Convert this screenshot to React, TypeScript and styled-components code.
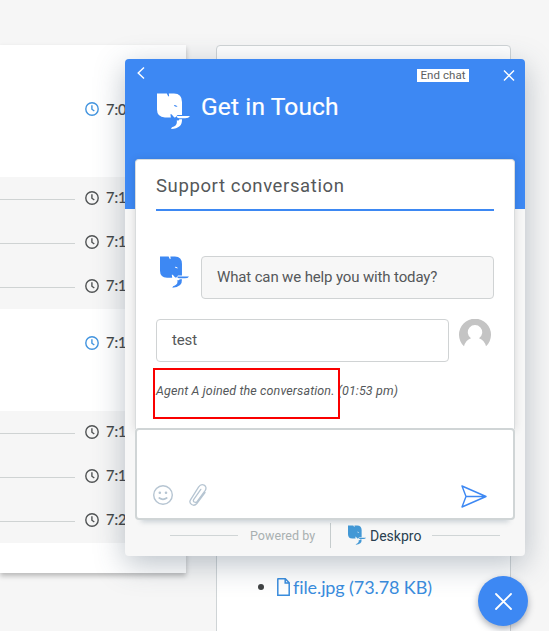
import React from "react";
import styled, { createGlobalStyle } from "styled-components";

const blue = "#3d88f3";

const GlobalStyle = createGlobalStyle`
  *, *::before, *::after { box-sizing: border-box; }
  body { margin: 0; background: #f6f6f6; }
  svg { display: block; flex: none; }
`;

const Page = styled.div`
  position: relative;
  width: 549px;
  height: 631px;
  overflow: hidden;
  display: flex;
  align-items: flex-start;
  gap: 30px;
  padding-top: 45px;
  background: #f6f6f6;
  color: #404344;
  font-family: Lato, sans-serif;
`;

const Timeline = styled.div`
  width: 186px;
  height: 528px;
  flex: none;
  background: #fff;
  box-shadow: 0 3px 5px rgba(0, 0, 0, 0.25);
`;

const Group = styled.div<{ $muted?: boolean }>`
  background: ${(p) => (p.$muted ? "#f6f6f6" : "#fff")};
`;

const TimeRow = styled.div<{ $height: number; $shift?: number }>`
  display: flex;
  align-items: center;
  height: ${(p) => p.$height}px;
  padding-bottom: ${(p) => p.$shift ?? 0}px;
`;

const Rule = styled.div<{ $hidden?: boolean }>`
  width: 75px;
  height: 1px;
  margin: 2px 10px 0 0;
  background: ${(p) => (p.$hidden ? "transparent" : "#cfd3d3")};
`;

const Time = styled.span`
  margin-left: 6px;
  font-size: 14.5px;
  line-height: 20px;
  -webkit-text-stroke: 0.2px currentColor;
`;

const Details = styled.div`
  width: 295px;
  height: 600px;
  flex: none;
  display: flex;
  align-items: flex-start;
  padding: 530px 0 0 41px;
  background: #fff;
  border: 1px solid #cfd4d6;
  border-radius: 4px;
`;

const Bullet = styled.span`
  width: 6px;
  height: 6px;
  margin: 8px 13px 0 0;
  border-radius: 50%;
  background: #404344;
`;

const FileLink = styled.a`
  display: flex;
  align-items: center;
  gap: 3px;
  color: #3a8dde;
  font-size: 18px;
  line-height: 22px;
  letter-spacing: -0.1px;
  white-space: nowrap;
`;

const Widget = styled.section`
  position: absolute;
  left: 125px;
  top: 59px;
  width: 400px;
  height: 497px;
  display: flex;
  flex-direction: column;
  border-radius: 4px;
  background: #f7f7f7;
  box-shadow: 0 8px 30px rgba(59, 81, 99, 0.35);
  font-family: Roboto, sans-serif;
  color: #55585a;
`;

const Header = styled.header`
  height: 150px;
  flex: none;
  border-radius: 4px 4px 0 0;
  background: ${blue};
  color: #fff;
`;

const HeaderBar = styled.div`
  display: flex;
  align-items: flex-start;
  height: 34px;
  padding: 8px 10px 0 12px;
`;

const EndChat = styled.span`
  width: 52px;
  height: 13px;
  margin: 2px 34px 0 auto;
  background: #fff;
  color: #5c5f61;
  font-size: 11.5px;
  line-height: 13px;
  letter-spacing: 0.05px;
  text-align: center;
  white-space: nowrap;
`;

const Brand = styled.div`
  display: flex;
  gap: 11px;
  padding-left: 32px;
`;

const BrandTitle = styled.h1`
  margin: 0;
  font-size: 24.5px;
  line-height: 27px;
  font-weight: 400;
  letter-spacing: 0.13px;
  -webkit-text-stroke: 0.2px currentColor;
`;

const Card = styled.div`
  width: 380px;
  height: 270px;
  flex: none;
  margin: -50px 0 0 10px;
  padding: 0 20px;
  background: #fff;
  border: 1px solid #d9dcdd;
  border-bottom: 0;
  border-radius: 4px 4px 0 0;
  box-shadow: 0 1px 8px rgba(0, 0, 0, 0.13);
`;

const ChatTitle = styled.h2`
  height: 51px;
  margin: 0 0 45px;
  padding-top: 16px;
  border-bottom: 2px solid ${blue};
  font-size: 18.5px;
  line-height: 21px;
  font-weight: 400;
  letter-spacing: 0.62px;
`;

const Message = styled.div`
  display: flex;
  gap: 10px;
  margin-bottom: 20px;
`;

const BotAvatar = styled.div`
  width: 35px;
  padding-left: 4px;
`;

const Bubble = styled.div<{ $muted?: boolean }>`
  width: 293px;
  height: 43px;
  padding: 0 15px;
  border: 1px solid #d0d3d4;
  border-radius: 4px;
  background: ${(p) => (p.$muted ? "#f7f7f7" : "#fff")};
  font-size: 15px;
  line-height: 41px;
  letter-spacing: -0.14px;
`;

const EventLine = styled.div`
  position: relative;
  top: 1px;
  font-size: 12.5px;
  line-height: 16px;
  font-style: italic;
  letter-spacing: 0.12px;
  white-space: nowrap;
`;

const Highlight = styled.div`
  position: absolute;
  left: -3px;
  top: -15px;
  width: 187px;
  height: 51px;
  border: 2px solid #fa0000;
`;

const Composer = styled.div`
  width: 380px;
  height: 92px;
  flex: none;
  display: flex;
  align-items: flex-end;
  margin: -1px 0 0 10px;
  padding: 0 26px 10px 15px;
  background: #fff;
  border: 2px solid #d0d5d6;
  border-radius: 4px;
  box-shadow: 0 8px 5px -6px rgba(70, 100, 120, 0.25);
  position: relative;
`;

const SmileIcon = styled.svg`
  margin-bottom: 2px;
`;

const ClipIcon = styled.svg`
  margin: 0 auto 1px 12px;
`;

const Footer = styled.footer`
  display: flex;
  align-items: center;
  height: 30px;
  padding-left: 45px;
  color: #a9b0b1;
  font-size: 12.5px;
`;

const FooterLine = styled.div`
  width: 68px;
  height: 1px;
  background: #d0d5d6;
`;

const Powered = styled.span`
  width: 92px;
  padding-left: 12px;
  letter-spacing: 0.05px;
  white-space: nowrap;
`;

const Divider = styled.div`
  width: 1px;
  height: 25px;
  margin-right: 17px;
  background: #c6cccd;
`;

const Deskpro = styled.span`
  width: 62px;
  margin: 1px 0 0 4px;
  color: #293f50;
  font-size: 14px;
`;

const Launcher = styled.button`
  position: absolute;
  left: 478px;
  top: 576px;
  width: 50px;
  height: 50px;
  padding: 0;
  display: grid;
  place-items: center;
  border: 0;
  border-radius: 50%;
  background: ${blue};
  box-shadow: 0 3px 7px rgba(40, 50, 70, 0.4);
`;

const Clock = ({ color }: { color: string }) => (
  <svg width="15" height="15" viewBox="0 0 15 15" fill="none" stroke={color}>
    <circle cx="7" cy="7" r="6.2" strokeWidth="1.4" />
    <path d="M6.9 3.3V7.2L9.3 9" strokeWidth="1.4" />
  </svg>
);

const Elephant = ({ width, height, color }: { width: number; height: number; color: string }) => (
  <svg width={width} height={height} viewBox="0 0 33 36" fill={color}>
    <path
      fillRule="evenodd"
      d="M0 .5H9.8L11.3 3.4 12.1 3 11.8 .5H17Q25 .7 25 9V22H20.5L18.6 24.2 17.3 24.4 14.5 21.2 13.4 21.2 13.9 24.5H8Q0 24 0 16.5ZM16.8 12.2Q18.8 11.4 20.6 13.7 18 14.2 16.8 12.2Z"
    />
    <path d="M19.5 23H33Q31.8 25.2 28.2 25.2H22Q20 25.2 19.5 23Z" />
    <path d="M25 26.2Q25.6 35.3 14 36 14.4 33.8 17 33.4 20.6 31.8 19.8 27.2 22.2 28 22.3 26.2Z" />
  </svg>
);

const Cross = ({ size, stroke }: { size: number; stroke: number }) => (
  <svg width={size} height={size} viewBox={`0 0 ${size} ${size}`} stroke="#fff" strokeWidth={stroke} strokeLinecap="round">
    <path d={`M1 1L${size - 1} ${size - 1}M${size - 1} 1L1 ${size - 1}`} />
  </svg>
);

const groups = [
  { lead: "7:0", times: ["7:1", "7:1", "7:1"], height: 132, shift: 3 },
  { lead: "7:1", times: ["7:1", "7:1", "7:2"], height: 102, shift: 34 },
];

export default function App() {
  return (
    <>
      <GlobalStyle />
      <Page>
        <Timeline>
          {groups.map((group, i) => (
            <React.Fragment key={i}>
              <Group>
                <TimeRow $height={group.height} $shift={group.shift}>
                  <Rule $hidden />
                  <Clock color="#4294df" />
                  <Time>{group.lead}</Time>
                </TimeRow>
              </Group>
              <Group $muted>
                {group.times.map((time, j) => (
                  <TimeRow key={j} $height={44} $shift={2}>
                    <Rule />
                    <Clock color="#515455" />
                    <Time>{time}</Time>
                  </TimeRow>
                ))}
              </Group>
            </React.Fragment>
          ))}
        </Timeline>
        <Details>
          <Bullet />
          <FileLink>
            <svg width="13" height="18" viewBox="0 0 13 18" fill="none" stroke="currentColor" strokeWidth="1.5">
              <path d="M1 .8H8.3L12.2 4.8V17.2H.8V1ZM8.2 1V5H12" />
            </svg>
            file.jpg (73.78 KB)
          </FileLink>
        </Details>

        <Widget>
          <Header>
            <HeaderBar>
              <svg width="8" height="12" viewBox="0 0 8 12" fill="none" stroke="#fff" strokeWidth="1.4">
                <path d="M7 .5L1.2 6L7 11.5" />
              </svg>
              <EndChat>End chat</EndChat>
              <svg width="12" height="16" viewBox="0 -2.5 12 16" stroke="#fff" strokeWidth="1.4">
                <path d="M1 1L11 11M11 1L1 11" />
              </svg>
            </HeaderBar>
            <Brand>
              <Elephant width={33} height={36} color="#fff" />
              <BrandTitle>Get in Touch</BrandTitle>
            </Brand>
          </Header>
          <Card>
            <ChatTitle>Support conversation</ChatTitle>
            <Message>
              <BotAvatar>
                <Elephant width={29} height={32} color={blue} />
              </BotAvatar>
              <Bubble $muted>What can we help you with today?</Bubble>
            </Message>
            <Message>
              <Bubble>test</Bubble>
              <svg width="32" height="32" viewBox="0 0 32 32">
                <path fill="#c4c4c4" fillRule="evenodd" d="M5 27.3A16 16 0 1 1 27 27.3Q25.5 21.5 20 19.3A7.2 7.2 0 1 0 12 19.3Q6.5 21.5 5 27.3Z" />
              </svg>
            </Message>
            <EventLine>
              Agent A joined the conversation. (01:53 pm)
              <Highlight />
            </EventLine>
          </Card>
          <Composer>
            <SmileIcon width="22" height="22" viewBox="0 0 22 22" fill="none" stroke="#b6c5d2" strokeWidth="1.4" strokeLinecap="round">
              <circle cx="11" cy="11" r="9.3" />
              <path d="M7.3 14Q11 16.6 14.7 14" strokeWidth="1.7" />
              <circle cx="7.8" cy="8.7" r=".6" fill="#b6c5d2" />
              <circle cx="14" cy="8.7" r=".6" fill="#b6c5d2" />
            </SmileIcon>
            <ClipIcon width="24" height="24" viewBox="0 0 24 24" fill="none" stroke="#b6c5d2" strokeWidth="1.3" strokeLinecap="round">
              <path d="M19 9.5L10.8 20.5C7.7 24.3 2.3 20.6 4.5 16.8L12.5 4.2C15.7-.7 22 2.7 19.3 7.3L11.2 18.3C9.3 20.6 6.2 18.6 7.8 16.3L14.8 6.4" />
            </ClipIcon>
            <svg width="26" height="23" viewBox="0 0 26 23" fill="none" stroke={blue} strokeWidth="1.4" strokeLinejoin="round">
              <path d="M1 1L25 11.5L1 22L5 11.5ZM5 11.5H25" />
            </svg>
          </Composer>
          <Footer>
            <FooterLine />
            <Powered>Powered by</Powered>
            <Divider />
            <Elephant width={18} height={20} color="#4398d5" />
            <Deskpro>Deskpro</Deskpro>
            <FooterLine />
          </Footer>
        </Widget>

        <Launcher aria-label="Close chat">
          <Cross size={17} stroke={1.8} />
        </Launcher>
      </Page>
    </>
  );
}
